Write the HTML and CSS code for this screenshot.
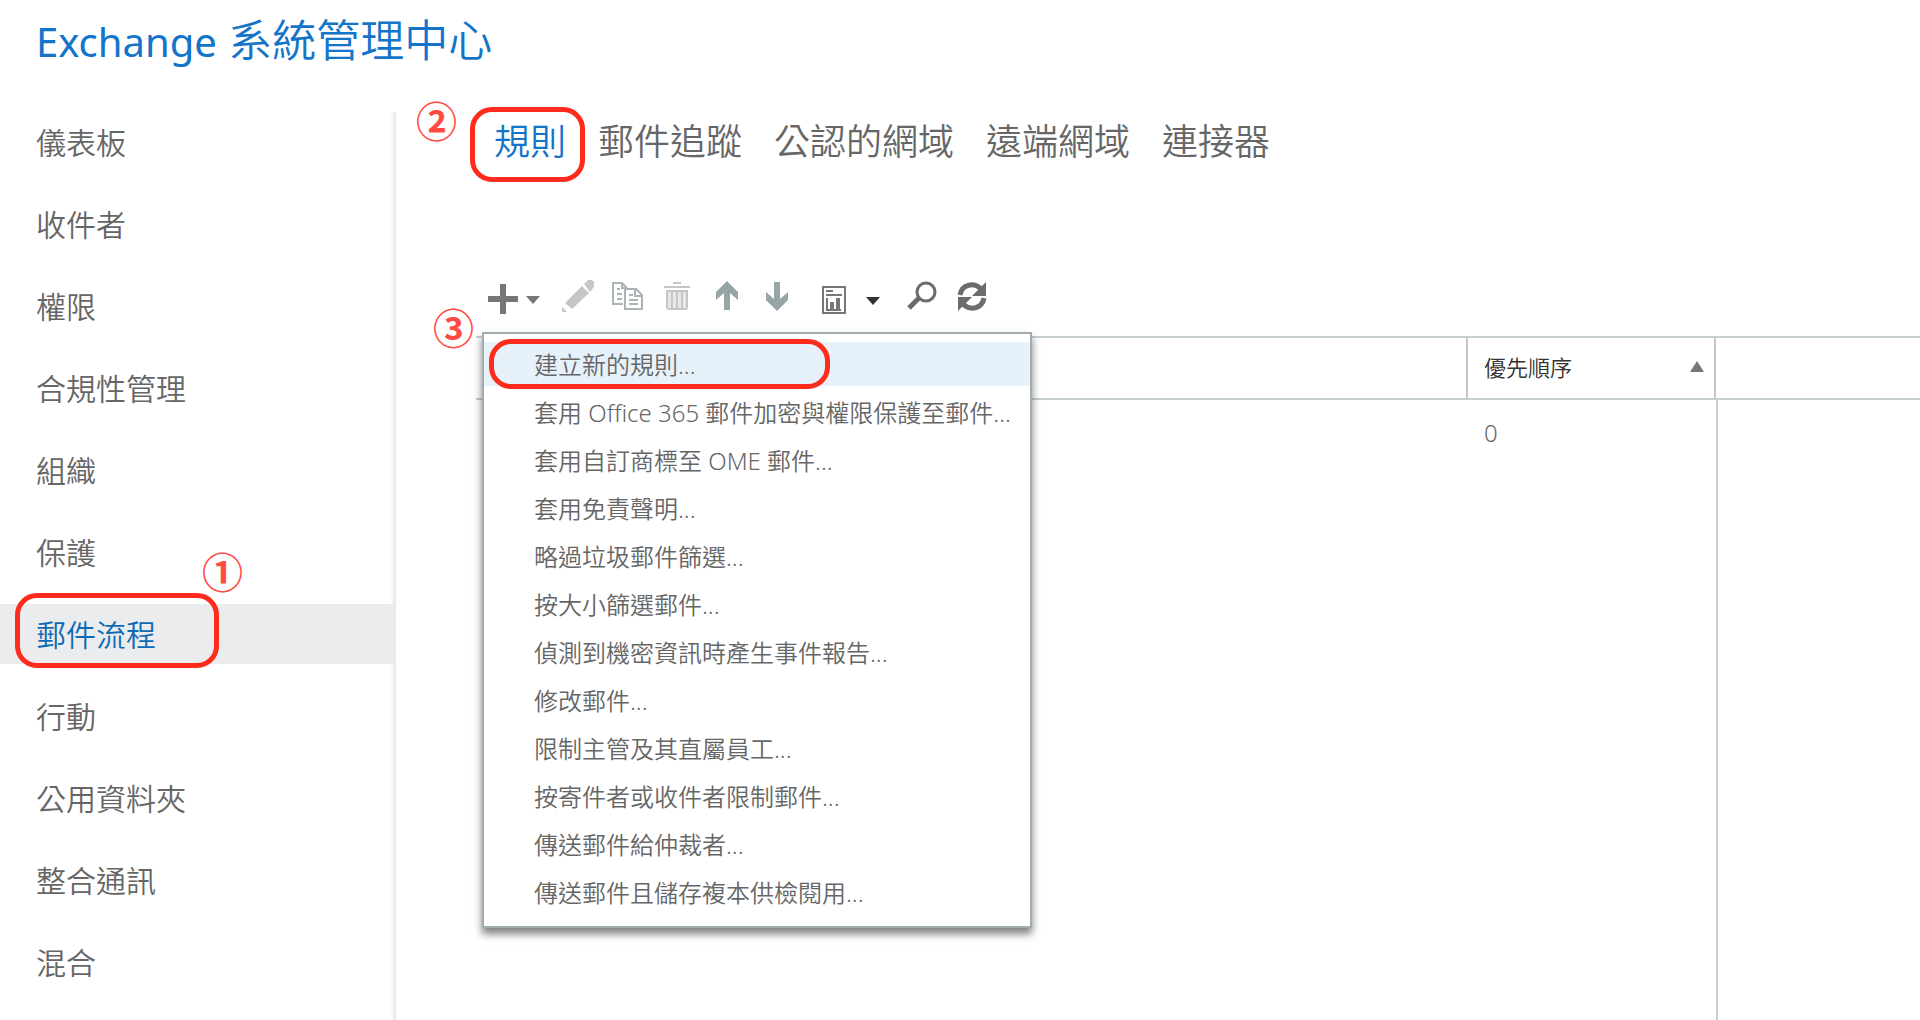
FILE: index.html
```html
<!DOCTYPE html>
<html lang="zh-Hant">

<head>
    <meta charset="utf-8">
    <title>Exchange 系統管理中心</title>
    <link rel="stylesheet" href="styles.css">
</head>

<body>

    <header class="header">
        <h1><span class="product">Exchange</span> 系統管理中心</h1>
    </header>

    <div class="page">
        <nav class="sidebar">
            <a href="#">儀表板</a>
            <a href="#">收件者</a>
            <a href="#">權限</a>
            <a href="#">合規性管理</a>
            <a href="#">組織</a>
            <a href="#">保護</a>
            <a href="#" class="active">郵件流程<span class="mark mark-nav"></span><span class="step step-nav">①</span></a>
            <a href="#">行動</a>
            <a href="#">公用資料夾</a>
            <a href="#">整合通訊</a>
            <a href="#">混合</a>
        </nav>

        <main class="content">
            <nav class="tabs">
                <a href="#" class="active">規則<span class="mark mark-tab"></span><span class="step step-tab">②</span></a>
                <a href="#">郵件追蹤</a>
                <a href="#">公認的網域</a>
                <a href="#">遠端網域</a>
                <a href="#">連接器</a>
            </nav>

            <div class="toolbar">
                <div class="dropdown">
                    <button type="button" class="split" aria-label="新增">
                        <svg width="30" height="32" viewBox="0 0 30 32" fill="#777">
                            <path d="M12 1h6v12h12v6H18v12h-6V19H0v-6h12z" />
                        </svg>
                        <svg width="14" height="32" viewBox="0 0 14 32" fill="#777">
                            <path d="M0 13h14l-7 8z" />
                        </svg>
                    </button>

                    <div class="menu">
                        <button type="button" class="selected">建立新的規則...<span class="mark mark-menu"></span></button>
                        <button type="button">套用 Office 365 郵件加密與權限保護至郵件...</button>
                        <button type="button">套用自訂商標至 OME 郵件...</button>
                        <button type="button">套用免責聲明...</button>
                        <button type="button">略過垃圾郵件篩選...</button>
                        <button type="button">按大小篩選郵件...</button>
                        <button type="button">偵測到機密資訊時產生事件報告...</button>
                        <button type="button">修改郵件...</button>
                        <button type="button">限制主管及其直屬員工...</button>
                        <button type="button">按寄件者或收件者限制郵件...</button>
                        <button type="button">傳送郵件給仲裁者...</button>
                        <button type="button">傳送郵件且儲存複本供檢閱用...</button>
                        <span class="step step-menu">③</span>
                    </div>
                </div>
                <button type="button" aria-label="編輯">
                    <svg width="32" height="32" viewBox="0 0 32 32" fill="#c6c6c6">
                        <path d="M3 23L20 6l7 7L10 29z" />
                        <path d="M22 4l4-4h4l2 2v5l-4 5z" />
                        <path d="M0 27l5 5H0z" />
                    </svg>
                </button>
                <button type="button" aria-label="複製">
                    <svg width="32" height="32" viewBox="0 0 32 32" fill="none" stroke="#a9b5b6" stroke-width="2">
                        <path d="M11 24H1V3h9l5 5M5 9h3M5 14h5M5 19h5M10 3v5h4" />
                        <path d="M13 9h11l6 6v14H13zM23 9v7h7M17 15h4M17 20h9M17 24h9" />
                    </svg>
                </button>
                <button type="button" aria-label="刪除">
                    <svg width="32" height="32" viewBox="0 0 32 32" fill="none" stroke="#c6c6c6" stroke-width="2">
                        <path d="M11 3h8M2 7h26" />
                        <path d="M5 11h20v16q0 2-2 2H7q-2 0-2-2z" fill="#e8e8e8" />
                        <path d="M10 12v17M15 12v17M20 12v17" />
                    </svg>
                </button>
                <button type="button" aria-label="上移">
                    <svg width="32" height="32" viewBox="0 0 32 32" fill="#98a5a7">
                        <path d="M15 1l11 11v8l-8-7v17h-6V13l-8 7v-8z" />
                    </svg>
                </button>
                <button type="button" aria-label="下移">
                    <svg width="32" height="32" viewBox="0 0 32 32" fill="#98a5a7">
                        <path d="M15 31L4 20v-8l8 7V2h6v17l8-7v8z" />
                    </svg>
                </button>
                <button type="button" class="split report" aria-label="報告">
                    <svg width="26" height="36" viewBox="0 0 26 36" fill="none" stroke="#777" stroke-width="2">
                        <path d="M1 7h22v26H1zM4 11h7M4 15h16M5 18v12h14" />
                        <path d="M10 22v8M16 18v12" stroke-width="4" />
                    </svg>
                    <svg width="14" height="32" viewBox="0 0 14 32" fill="#333">
                        <path d="M0 17h14l-7 8z" />
                    </svg>
                </button>
                <button type="button" aria-label="搜尋">
                    <svg width="32" height="32" viewBox="0 0 32 32" fill="none" stroke="#6c6c6c">
                        <circle cx="20" cy="12" r="9" stroke-width="3" />
                        <path d="M13 18L3 28" stroke-width="5" />
                    </svg>
                </button>
                <button type="button" aria-label="重新整理">
                    <svg width="32" height="32" viewBox="0 0 32 32" fill="none" stroke="#6c6c6c" stroke-width="5">
                        <path d="M4 15C6 4 18 2 25 9" />
                        <path d="M28 18c-2 11-14 13-21 6" />
                        <path d="M30 2v14H16l5-5z" fill="#6c6c6c" stroke="none" />
                        <path d="M2 31V17h14l-5 5z" fill="#6c6c6c" stroke="none" />
                    </svg>
                </button>
            </div>

            <div class="grid">
                <table>
                    <thead>
                        <tr>
                            <th></th>
                            <th class="priority">
                                <div class="sort">優先順序
                                    <svg width="14" height="12" viewBox="0 0 14 12" fill="#777">
                                        <path d="M7 1l7 11H0z" />
                                    </svg>
                                </div>
                            </th>
                            <th class="details"></th>
                        </tr>
                    </thead>
                    <tbody>
                        <tr>
                            <td></td>
                            <td>0</td>
                            <td class="details"></td>
                        </tr>
                    </tbody>
                </table>
            </div>
        </main>
    </div>

</body>

</html>
```
FILE: styles.css
```css
* {
    box-sizing: border-box;
}

body {
    display: flex;
    flex-direction: column;
    min-height: 100vh;
    margin: 0;
    background-color: #fff;
    color: #666;
    font-family: "Noto Sans", "Noto Sans CJK TC", sans-serif;
    font-weight: 350;
}

a {
    color: inherit;
    text-decoration: none;
}

button {
    padding: 0;
    border: 0;
    background: none;
    color: inherit;
    font: inherit;
    cursor: pointer;
}

svg {
    display: block;
}

.header {
    height: 112px;
    padding-left: 36px;
}

.header h1 {
    margin: 0;
    color: #1374ca;
    font-size: 44px;
    font-weight: 350;
    line-height: 80px;
}

.product {
    font-size: 40px;
    font-weight: 400;
}

.page {
    display: flex;
    flex: 1;
}

/* Left navigation */
.sidebar {
    display: flex;
    flex-direction: column;
    gap: 22px;
    width: 396px;
    padding-right: 2px;
    background: linear-gradient(to left, #e6e6e6, #fff 6px);
}

.sidebar a {
    position: relative;
    height: 60px;
    padding-left: 36px;
    font-size: 30px;
    line-height: 62px;
}

.sidebar a.active {
    background-color: #ebecee;
    color: #0f6ab4;
}

.content {
    display: flex;
    flex: 1;
    flex-direction: column;
    padding-left: 80px;
}

.tabs {
    display: flex;
    gap: 32px;
    padding-left: 18px;
    font-size: 36px;
    line-height: 60px;
}

.tabs a {
    position: relative;
}

.tabs a.active {
    color: #1374ca;
}

/* Toolbar */
.toolbar {
    display: flex;
    gap: 18px;
    margin-top: 108px;
    padding-left: 6px;
    height: 56px;
}

.toolbar > button {
    height: 32px;
}

.dropdown {
    position: relative;
    width: 62px;
}

.split {
    display: flex;
    gap: 8px;
    padding: 3px 0 0 6px;
}

.toolbar > .report {
    gap: 18px;
    padding: 0 8px 0 10px;
}

.menu {
    position: absolute;
    top: 52px;
    left: 0;
    z-index: 1;
    width: 550px;
    padding: 8px 0 12px;
    border: 2px solid #a0adae;
    background-color: #fff;
    box-shadow: 0 6px 8px rgba(0, 0, 0, 0.5);
    font-size: 24px;
}

.menu button {
    display: block;
    position: relative;
    width: 100%;
    height: 44px;
    padding-left: 50px;
    line-height: 46px;
    text-align: left;
    white-space: nowrap;
}

.menu button + button {
    margin-top: 4px;
}

.menu .selected {
    background-color: #e6f1fa;
}

/* Rules list */
.grid {
    display: grid;
    flex: 1;
}

table {
    width: 100%;
    height: 100%;
    border-collapse: separate;
    border-spacing: 0;
    table-layout: fixed;
}

th {
    height: 64px;
    padding: 0 10px 4px 16px;
    border-top: 2px solid #c8cfd3;
    border-bottom: 2px solid #c8cfd3;
    border-right: 2px solid #c6c6c6;
    color: #333;
    font-size: 22px;
    font-weight: 350;
    text-align: left;
}

th.priority {
    width: 248px;
}

th.details {
    width: 204px;
    border-right: 0;
}

.sort {
    display: flex;
    align-items: center;
    justify-content: space-between;
}

td {
    padding: 16px;
    font-size: 24px;
    vertical-align: top;
}

td.details {
    border-left: 2px solid #c8cfd3;
}

/* Step marks */
.mark {
    position: absolute;
    border: 5px solid #ff2b1c;
    border-radius: 22px;
}

.mark-nav {
    top: -11px;
    left: 15px;
    width: 204px;
    height: 75px;
}

.mark-tab {
    top: -5px;
    left: -24px;
    width: 115px;
    height: 75px;
}

.mark-menu {
    top: -3px;
    left: 5px;
    width: 341px;
    height: 50px;
}

.step {
    position: absolute;
    color: #ff4b42;
    font-family: "Noto Sans CJK TC", sans-serif;
    font-size: 41px;
    font-weight: 700;
    line-height: 40px;
}

.step-nav {
    top: -54px;
    left: 202px;
}

.step-tab {
    top: -13px;
    left: -78px;
}

.step-menu {
    top: -28px;
    left: -51px;
}
```
